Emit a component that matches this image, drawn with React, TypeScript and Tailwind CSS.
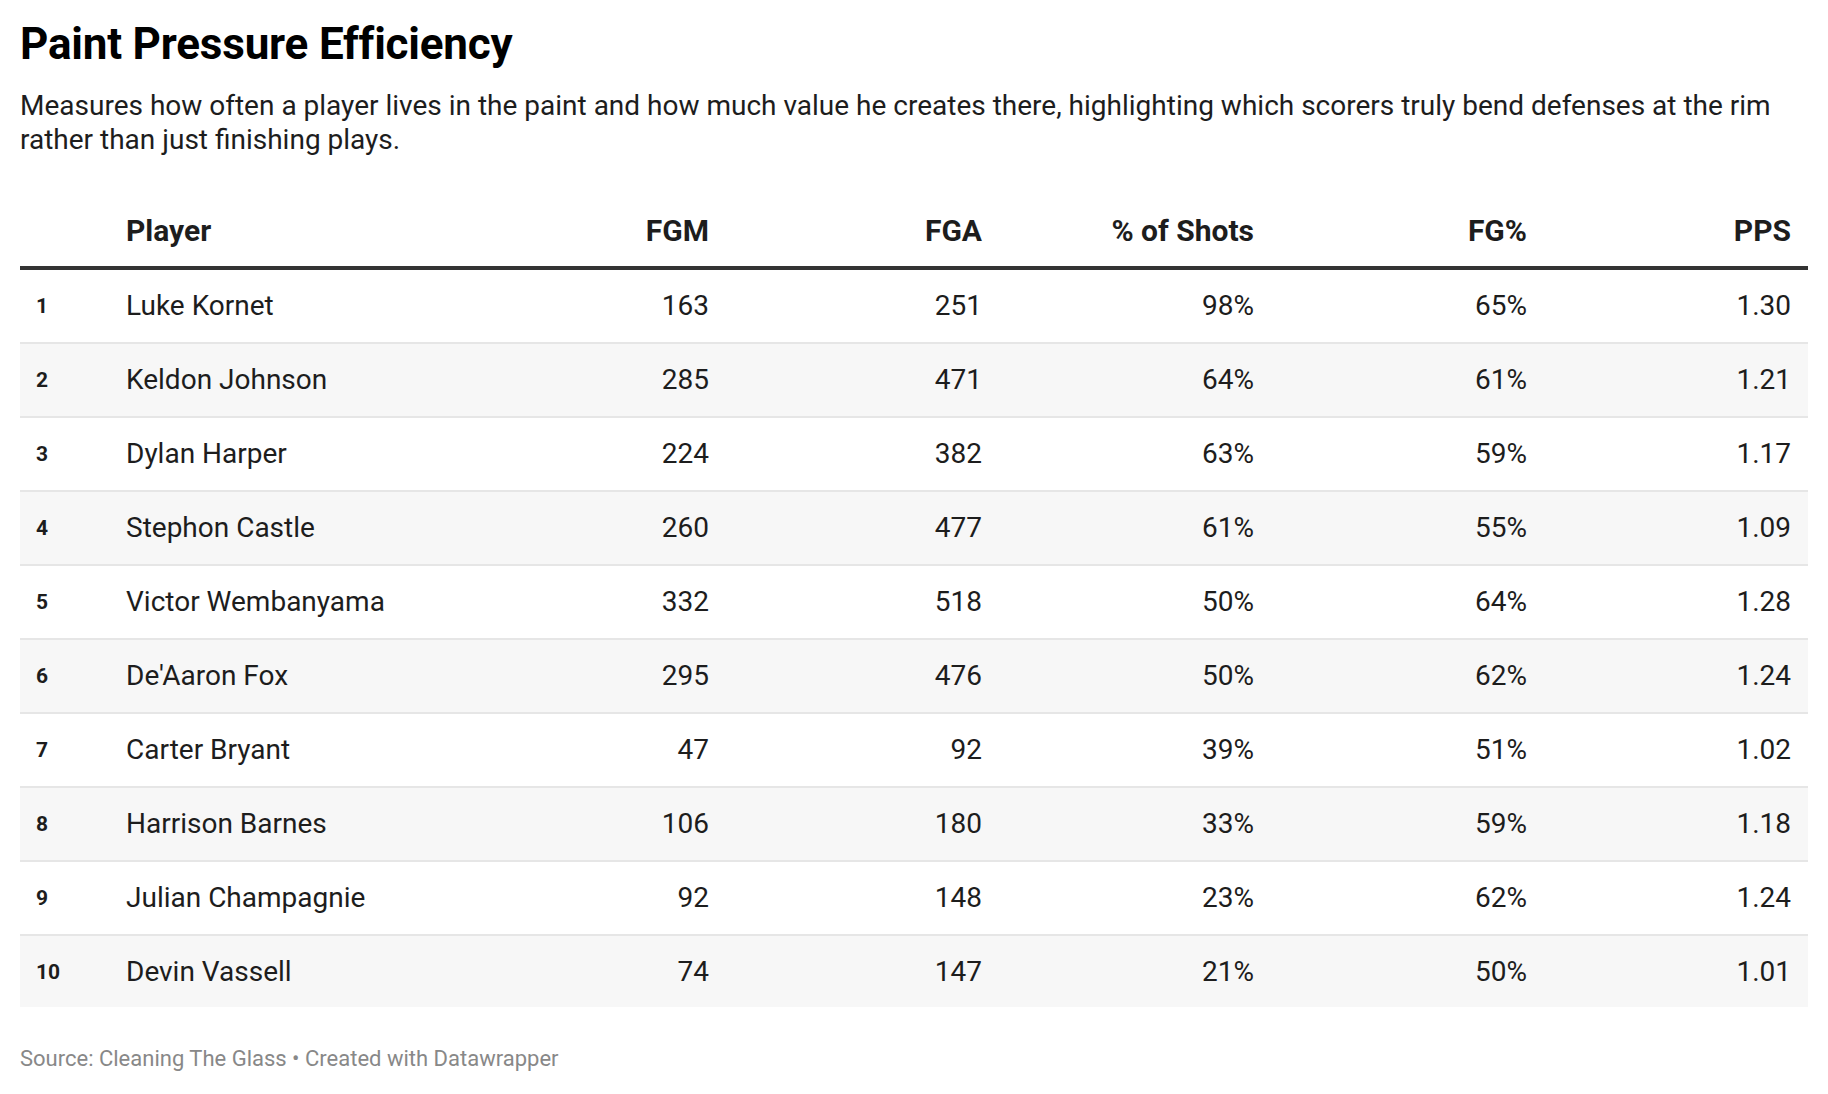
import React from "react";

const rows = [
  { r: 1, name: "Luke Kornet", fgm: "163", fga: "251", shots: "98%", fg: "65%", pps: "1.30" },
  { r: 2, name: "Keldon Johnson", fgm: "285", fga: "471", shots: "64%", fg: "61%", pps: "1.21" },
  { r: 3, name: "Dylan Harper", fgm: "224", fga: "382", shots: "63%", fg: "59%", pps: "1.17" },
  { r: 4, name: "Stephon Castle", fgm: "260", fga: "477", shots: "61%", fg: "55%", pps: "1.09" },
  { r: 5, name: "Victor Wembanyama", fgm: "332", fga: "518", shots: "50%", fg: "64%", pps: "1.28" },
  { r: 6, name: "De'Aaron Fox", fgm: "295", fga: "476", shots: "50%", fg: "62%", pps: "1.24" },
  { r: 7, name: "Carter Bryant", fgm: "47", fga: "92", shots: "39%", fg: "51%", pps: "1.02" },
  { r: 8, name: "Harrison Barnes", fgm: "106", fga: "180", shots: "33%", fg: "59%", pps: "1.18" },
  { r: 9, name: "Julian Champagnie", fgm: "92", fga: "148", shots: "23%", fg: "62%", pps: "1.24" },
  { r: 10, name: "Devin Vassell", fgm: "74", fga: "147", shots: "21%", fg: "50%", pps: "1.01" },
];

const grid = "grid grid-cols-[86px_440px_163px_273px_272px_273px_280px]";

export default function App() {
  return (
    <div
      className="w-[1828px] min-h-[1094px] bg-white px-5 pt-[18px] text-[#1d1d1d]"
      style={{ fontFamily: "Roboto, 'Liberation Sans', sans-serif" }}
    >
      <h1 className="text-[44px] font-bold leading-[52px] text-[#000] tracking-[-0.2px]">
        Paint Pressure Efficiency
      </h1>
      <p className="mt-[19px] text-[28px] leading-[34px] text-[#1d1d1d] pr-[20px]">
        Measures how often a player lives in the paint and how much value he creates there, highlighting which scorers truly bend defenses at the rim rather than just finishing plays.
      </p>

      <div className="mt-[33px]">
        <div className={`${grid} border-b-4 border-[#333] pt-[23px] pb-[17px] text-[30px] font-bold leading-[36px] text-[#1d1d1d]`}>
          <div />
          <div className="pl-5">Player</div>
          <div className="text-right">FGM</div>
          <div className="text-right">FGA</div>
          <div className="text-right">% of Shots</div>
          <div className="text-right">FG%</div>
          <div className="text-right pr-4">PPS</div>
        </div>
        {rows.map((row, i) => (
          <div
            key={row.r}
            className={`${grid} items-center text-[28px] leading-[34px] ${
              i % 2 === 1 ? "bg-[#f7f7f7]" : "bg-white"
            } ${i < rows.length - 1 ? "h-[74px] border-b-2 border-[#e6e6e6]" : "h-[71px]"}`}
          >
            <div className="pl-4 text-[21px] font-bold text-[#1d1d1d]">{row.r}</div>
            <div className="pl-5">{row.name}</div>
            <div className="text-right">{row.fgm}</div>
            <div className="text-right">{row.fga}</div>
            <div className="text-right">{row.shots}</div>
            <div className="text-right">{row.fg}</div>
            <div className="text-right pr-4">{row.pps}</div>
          </div>
        ))}
      </div>

      <div className="mt-[37px] text-[22px] leading-[30px] text-[#888888]">
        Source: Cleaning The Glass • Created with Datawrapper
      </div>
    </div>
  );
}
